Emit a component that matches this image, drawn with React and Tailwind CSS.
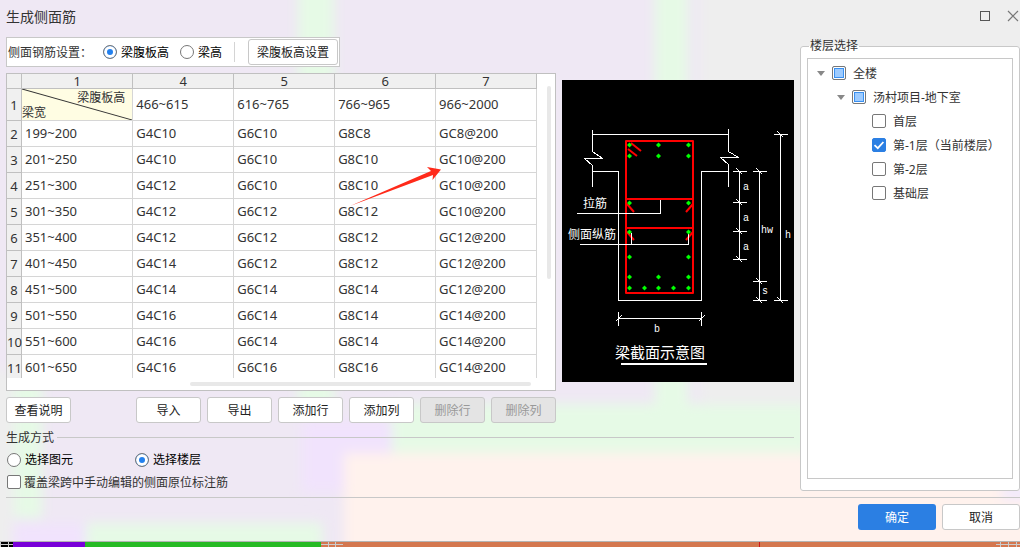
import { useEffect, useRef, useState } from "react";

const COLUMNS = ["1", "4", "5", "6", "7"];

const RANGES = ["466~615", "616~765", "766~965", "966~2000"];

const ROWS = [
  ["199~200", "G4C10", "G6C10", "G8C8", "GC8@200"],
  ["201~250", "G4C10", "G6C10", "G8C10", "GC10@200"],
  ["251~300", "G4C12", "G6C10", "G8C10", "GC10@200"],
  ["301~350", "G4C12", "G6C12", "G8C12", "GC10@200"],
  ["351~400", "G4C12", "G6C12", "G8C12", "GC12@200"],
  ["401~450", "G4C14", "G6C12", "G8C12", "GC12@200"],
  ["451~500", "G4C14", "G6C14", "G8C14", "GC12@200"],
  ["501~550", "G4C16", "G6C14", "G8C14", "GC14@200"],
  ["551~600", "G4C16", "G6C14", "G8C14", "GC14@200"],
  ["601~650", "G4C16", "G6C16", "G8C16", "GC14@200"],
];

const FLOORS = ["首层", "第-1层（当前楼层）", "第-2层", "基础层"];

function Backdrop() {
  return (
    <svg
      aria-hidden="true"
      className="absolute inset-0 -z-10 h-full w-full"
      viewBox="0 0 1020 547"
      preserveAspectRatio="none"
    >
      <defs>
        <filter id="soft" x="-5%" y="-5%" width="110%" height="110%">
          <feGaussianBlur stdDeviation="6" />
        </filter>
      </defs>
      <rect width="1020" height="547" fill="#efe8f4" />
      <g filter="url(#soft)">
        <rect x="700" y="-30" width="360" height="432" fill="#eeeeee" />
        <rect x="-30" y="370" width="42" height="200" fill="#eeeeee" />
        <rect x="298" y="-30" width="36" height="440" fill="#e6fae6" />
        <rect x="655" y="-30" width="33" height="440" fill="#e6fae6" />
        <rect x="14" y="380" width="28" height="138" fill="#e6fae6" />
        <rect x="390" y="404" width="420" height="50" fill="#e6fae6" />
        <rect x="302" y="420" width="90" height="72" fill="#f1e3fd" />
        <rect x="344" y="453" width="720" height="120" fill="#fff2ed" />
        <rect x="14" y="524" width="72" height="40" fill="#f1e3fd" />
        <rect x="86" y="523" width="236" height="40" fill="#e6fae6" />
        <rect x="1002" y="484" width="50" height="16" fill="#f1e9fd" />
      </g>
    </svg>
  );
}

function Button({ children, className = "", ...props }) {
  return (
    <button
      type="button"
      className={`h-[26px] shrink-0 rounded-[3px] border border-[#c8c8c8] bg-white pt-[2px] text-xs text-[#222] disabled:bg-[#e4e4e4] disabled:text-[#999] ${className}`}
      {...props}
    >
      {children}
    </button>
  );
}

function Radio({ children, className = "gap-1", ...props }) {
  return (
    <label className={`flex items-center whitespace-nowrap text-black ${className}`}>
      <input
        type="radio"
        className="size-[14px] shrink-0 appearance-none rounded-full border border-[#777] bg-white checked:bg-[#2380ee] checked:shadow-[inset_0_0_0_3px_#fff]"
        {...props}
      />
      <span className="pt-px">{children}</span>
    </label>
  );
}

function Checkbox({ children, partial = false, className = "gap-[7px]", ...props }) {
  const ref = useRef(null);

  useEffect(() => {
    ref.current.indeterminate = partial;
  }, [partial]);

  return (
    <label className={`flex items-center whitespace-nowrap ${className}`}>
      <span className="relative size-[14px] shrink-0">
        <input
          ref={ref}
          type="checkbox"
          className="peer block size-[14px] appearance-none rounded-[2px] border border-[#777] bg-white checked:border-[#2b7fe3] checked:bg-[#2b7fe3] indeterminate:bg-[#9dcbff] indeterminate:shadow-[inset_0_0_0_1px_#fff,inset_0_0_0_2px_#3a90f0]"
          {...props}
        />
        <svg
          viewBox="0 0 14 14"
          className="pointer-events-none absolute inset-0 hidden size-[14px] peer-checked:block"
        >
          <path d="M2.5 7.2 5.8 10.2 11.4 4" fill="none" stroke="#fff" strokeWidth="1.8" />
        </svg>
      </span>
      <span className="pt-[2px]">{children}</span>
    </label>
  );
}

function TitleBar() {
  return (
    <header className="flex h-[37px] shrink-0 items-start justify-between pt-[7px] pl-[6px]">
      <h1 className="text-sm">生成侧面筋</h1>
      <div className="flex items-center gap-4 pt-[3px] pr-px">
        <button type="button" aria-label="最大化">
          <svg width="12" height="12" viewBox="0 0 12 12" className="block">
            <rect x="1.5" y="1.5" width="9" height="9" fill="none" stroke="#555" />
          </svg>
        </button>
        <button type="button" aria-label="关闭">
          <svg width="12" height="12" viewBox="0 0 12 12" className="block">
            <path d="M1 1 11 11M11 1 1 11" stroke="#777" strokeWidth="1.2" />
          </svg>
        </button>
      </div>
    </header>
  );
}

function SettingsBar() {
  const [mode, setMode] = useState("web");
  return (
    <div className="flex h-[30px] shrink-0 items-center self-start border border-[#c8c8c8] bg-white px-px">
      <span className="w-[95px] pt-px whitespace-nowrap">侧面钢筋设置：</span>
      <Radio name="mode" checked={mode === "web"} onChange={() => setMode("web")}>
        梁腹板高
      </Radio>
      <Radio
        name="mode"
        className="ml-[11px] gap-1"
        checked={mode === "beam"}
        onChange={() => setMode("beam")}
      >
        梁高
      </Radio>
      <span className="mr-[13px] ml-3 h-5 w-px bg-[#d4d4d4]" />
      <Button className="w-[90px]">梁腹板高设置</Button>
    </div>
  );
}

function RebarTable() {
  const head = "border-r border-b border-[#c0c0c0] bg-[#f0f0f0] p-0 font-normal";
  const cell = "border-r border-b border-[#d6d6d6] bg-white pt-0 pr-0 pb-[2px] pl-[3px]";
  return (
    <div className="relative grid min-h-0 flex-1 grid-cols-[1fr_18px] grid-rows-[1fr_12px] border border-[#c0c0c0] bg-white">
      <div className="min-h-0 overflow-hidden">
        <table className="w-full table-fixed border-separate border-spacing-0 text-[13px] leading-[14px]">
          <colgroup>
            <col className="w-[15px]" />
            <col className="w-[21%]" />
            <col />
            <col />
            <col />
            <col />
          </colgroup>
          <thead>
            <tr className="h-[15px]">
              <th className={head} />
              {COLUMNS.map((column) => (
                <th key={column} scope="col" className={head}>
                  {column}
                </th>
              ))}
            </tr>
          </thead>
          <tbody>
            <tr className="h-8">
              <th scope="row" className={head}>
                1
              </th>
              <td className="relative border-r border-b border-[#d6d6d6] bg-[#fffde3] p-0 text-xs leading-[15px]">
                <svg
                  className="absolute inset-0 h-full w-full"
                  viewBox="0 0 110 31"
                  preserveAspectRatio="none"
                >
                  <path d="M0 0 110 31" stroke="#333" />
                </svg>
                <div className="relative pr-[7px] text-right">梁腹板高</div>
                <div className="relative">梁宽</div>
              </td>
              {RANGES.map((range) => (
                <td key={range} className={cell}>
                  {range}
                </td>
              ))}
            </tr>
            {ROWS.map((row, index) => (
              <tr key={row[0]} className="h-[26px]">
                <th scope="row" className={head}>
                  {index + 2}
                </th>
                {row.map((value, i) => (
                  <td key={i} className={cell}>
                    {value}
                  </td>
                ))}
              </tr>
            ))}
          </tbody>
        </table>
      </div>
      <div className="flex justify-end pt-3 pr-1">
        <div className="h-[66%] w-1 rounded-full bg-[#e8e8e8]" />
      </div>
      <div className="flex justify-end pt-1 pr-[6px]">
        <div className="h-1 w-[65%] rounded-full bg-[#e8e8e8]" />
      </div>
      <svg
        aria-hidden="true"
        className="pointer-events-none absolute top-[93px] left-[343px]"
        width="92"
        height="42"
        viewBox="0 0 92 42"
      >
        <path d="M0 39 81 4 77 0 91 2.5 82.500 13 83 8Z" fill="#ff2a1a" />
      </svg>
    </div>
  );
}

const DOTS = [
  [67, 65], [96, 65], [126, 65],
  [67, 76], [96, 76], [126, 76],
  [67, 123], [126, 123],
  [67, 152], [126, 152],
  [67, 177], [126, 177],
  [67, 197], [96, 197], [126, 197],
  [67, 208], [82, 208], [96, 208], [111, 208], [126, 208],
];

// [x, y] of every tick on the vertical dimension lines
const TICKS = [
  [177, 91], [177, 122], [177, 151], [177, 179],
  [197, 91], [197, 201], [197, 220],
  [218, 54], [218, 220],
];

function SectionDiagram() {
  return (
    <svg
      role="img"
      aria-label="梁截面示意图"
      className="mt-[7px] w-[232px] shrink-0 self-start bg-black"
      viewBox="0 0 232 302"
    >
      <g transform="translate(.5 .5)" fill="none" stroke="#fff" shapeRendering="crispEdges">
        <path d="M30 54H166" />
        <path d="M30 49V71L40 78H22L30 85V106" />
        <path d="M166 48V71L176 77H158L166 84V106" />
        <path d="M30 91H56V220H139V91H166" />
        <path d="M177 91V179M197 91V220M218 54V220" />
        {TICKS.map(([x, y]) => (
          <path key={`${x}-${y}`} d={`M${x - 7} ${y}h14M${x - 3} ${y - 3}l6 6`} />
        ))}
        <path d="M56 238H139M56 231V245M139 231V245M53 241l6 -6M136 241l6 -6" />
      </g>
      <g fill="none" stroke="#f00" strokeWidth="2">
        <path d="M64 61H131V213H64ZM64 119H131M64 148H131" strokeLinejoin="round" />
        <path d="M69 63 79 71M66 69 75 76M65 124 72 132M131 124 124 132M65 152 72 160M131 152 124 160" />
      </g>
      <g transform="translate(.5 .5)" fill="none" stroke="#fff" shapeRendering="crispEdges">
        <path d="M14 133H98V119M17 164H126V152M69 164V152" />
        <path d="M58 283.500H144" strokeWidth="2" />
      </g>
      {DOTS.map(([x, y]) => (
        <path key={`${x}-${y}`} d={`M${x - 2} ${y}l2.500 -2.500 2.500 2.500 -2.500 2.500Z`} fill="#0f0" />
      ))}
      <g fill="#fff" className="font-['Noto_Sans_CJK_SC',sans-serif] text-[12px]">
        <text x="21" y="128">拉筋</text>
        <text x="6" y="159">侧面纵筋</text>
        <text x="53" y="278" className="text-[15px]">梁截面示意图</text>
      </g>
      <g fill="#fff" className="font-['Liberation_Mono',monospace] text-[10px]">
        <text x="181" y="110">a</text>
        <text x="181" y="141">a</text>
        <text x="181" y="170">a</text>
        <text x="199" y="153">hw</text>
        <text x="223" y="158">h</text>
        <text x="200" y="214">s</text>
        <text x="92" y="252">b</text>
      </g>
    </svg>
  );
}

function GenerateMode() {
  const [target, setTarget] = useState("floor");
  return (
    <section className="mt-[6px] shrink-0 leading-4">
      <div className="flex items-center gap-[3px]">
        <h2 className="pt-px">生成方式</h2>
        <span className="h-px flex-1 bg-[#c8c8c8]" />
      </div>
      <div className="mt-[5px] flex pl-px">
        <Radio
          name="target"
          className="w-32 gap-1"
          checked={target === "element"}
          onChange={() => setTarget("element")}
        >
          选择图元
        </Radio>
        <Radio name="target" checked={target === "floor"} onChange={() => setTarget("floor")}>
          选择楼层
        </Radio>
      </div>
      <div className="mt-[5px] flex pl-px">
        <Checkbox className="gap-[3px]">覆盖梁跨中手动编辑的侧面原位标注筋</Checkbox>
      </div>
    </section>
  );
}

function Caret() {
  return (
    <svg width="8" height="5" viewBox="0 0 8 5" className="mr-[7px] shrink-0">
      <path d="M0 0H8L4 5Z" fill="#888" />
    </svg>
  );
}

function FloorPicker() {
  const [checked, setChecked] = useState(["第-1层（当前楼层）"]);
  const partial = checked.length > 0 && checked.length < FLOORS.length;

  const toggle = (floor) =>
    setChecked((list) =>
      list.includes(floor) ? list.filter((item) => item !== floor) : [...list, floor]
    );

  return (
    <fieldset className="mt-px mb-[6px] flex w-[220px] shrink-0 flex-col rounded-[3px] border border-[#c8c8c8] bg-white px-[6px] pt-1 pb-[11px]">
      <legend className="ml-[2px] px-px leading-4">楼层选择</legend>
      <ul className="h-full border border-[#c8c8c8] pt-[2px]">
        <li className="flex h-6 items-center pl-[9px]">
          <Caret />
          <Checkbox partial={partial}>全楼</Checkbox>
        </li>
        <li className="flex h-6 items-center pl-[29px]">
          <Caret />
          <Checkbox partial={partial}>汤村项目-地下室</Checkbox>
        </li>
        {FLOORS.map((floor) => (
          <li key={floor} className="flex h-6 items-center pl-16">
            <Checkbox checked={checked.includes(floor)} onChange={() => toggle(floor)}>
              {floor}
            </Checkbox>
          </li>
        ))}
      </ul>
    </fieldset>
  );
}

// slice of the drawing canvas that shows under the dialog
function CanvasStrip() {
  return (
    <div className="flex h-[5px] shrink-0">
      <svg className="h-[5px] w-[13px] shrink-0 bg-black" viewBox="0 0 13 5">
        <path d="M0 2.500H13M.5 0V5M8.500 0V5" stroke="#ccc" />
      </svg>
      <div className="w-[72px] bg-[#7800d8]" />
      <div className="w-[236px] bg-[#26ba24]" />
      <svg className="h-[5px] w-[22px] shrink-0 bg-[#d4774f]" viewBox="0 0 22 5">
        <path d="M0 2.500H22M7.500 0V5M14.500 0V5" stroke="#ccc" />
      </svg>
      <div className="flex-1 bg-[#d4774f]" />
      <div className="w-px bg-[#d01818]" />
      <div className="w-[236px] bg-[#d4774f]" />
      <svg className="h-[5px] w-6 shrink-0 bg-[#d4774f]" viewBox="0 0 24 5">
        <path d="M0 2.500H24M4.500 0V5M12.500 0V5M20.500 0V5" stroke="#ccc" />
      </svg>
    </div>
  );
}

export default function App() {
  return (
    <div className="relative isolate flex h-screen flex-col overflow-hidden font-['Noto_Sans','Noto_Sans_CJK_SC',sans-serif] text-xs text-[#333]">
      <Backdrop />
      <TitleBar />
      <main className="flex min-h-0 flex-1 gap-[6px] pl-[6px]">
        <div className="flex min-w-0 flex-1 flex-col">
          <SettingsBar />
          <div className="mt-[6px] flex min-h-0 flex-1 gap-[6px]">
            <div className="flex min-w-0 flex-1 flex-col">
              <RebarTable />
              <div className="mt-[6px] flex gap-[6px]">
                <Button className="mr-auto w-[65px]">查看说明</Button>
                <Button className="w-[65px]">导入</Button>
                <Button className="w-[65px]">导出</Button>
                <Button className="w-[65px]">添加行</Button>
                <Button className="w-[65px]">添加列</Button>
                <Button className="w-[65px]" disabled>
                  删除行
                </Button>
                <Button className="w-[65px]" disabled>
                  删除列
                </Button>
              </div>
            </div>
            <SectionDiagram />
          </div>
          <GenerateMode />
          <div className="h-[6px] shrink-0" />
        </div>
        <FloorPicker />
      </main>
      <footer className="ml-[6px] flex shrink-0 justify-end gap-[6px] border-t border-[#c8c8c8] pt-[6px] pb-[11px]">
        <button
          type="button"
          className="h-[26px] w-[78px] rounded-[3px] bg-[#2b7fe3] pt-[2px] text-white"
        >
          确定
        </button>
        <Button className="w-[78px]">取消</Button>
      </footer>
      <div className="h-px shrink-0 bg-[#b4b4b4]" />
      <CanvasStrip />
    </div>
  );
}
